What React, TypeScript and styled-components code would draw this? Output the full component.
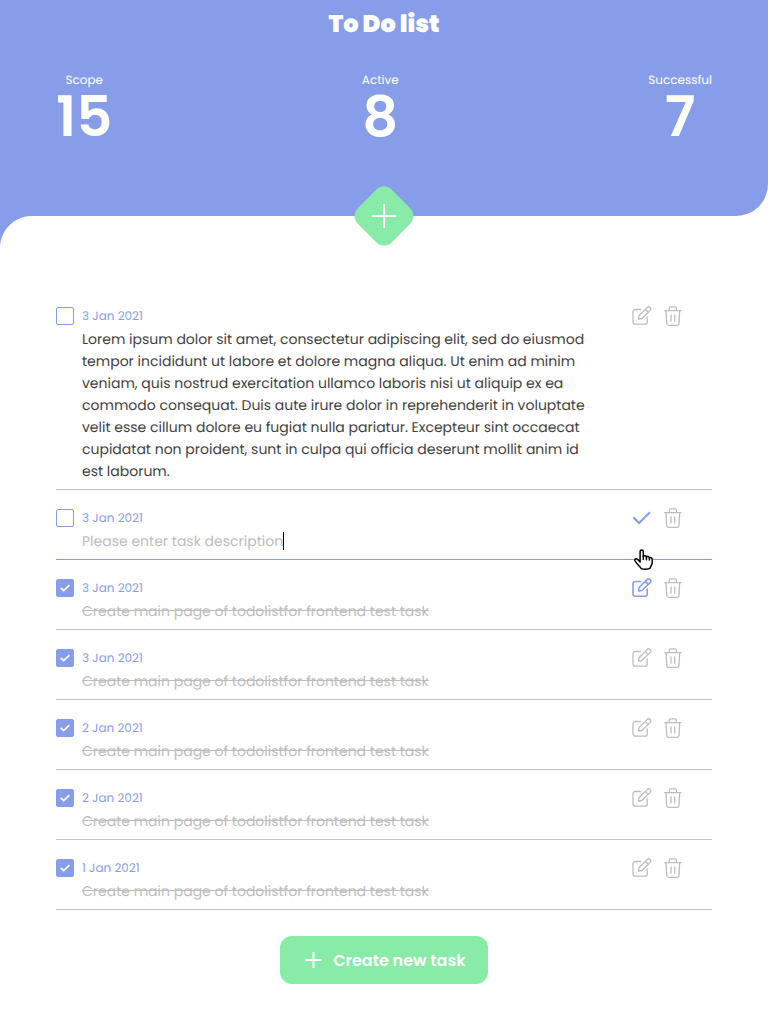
import React from 'react';
import styled, { createGlobalStyle } from 'styled-components';

const blue = '#879de9';
const green = '#88eba8';
const grey = '#c4c4c4';

const GlobalStyle = createGlobalStyle`
  * { box-sizing: border-box; }
  body {
    margin: 0;
    background: #fff;
    font-family: Poppins, Inter, 'Open Sans', sans-serif;
    text-rendering: geometricPrecision;
  }
  button { font: inherit; border: 0; padding: 0; background: none; cursor: pointer; }
`;

const Page = styled.div`
  width: 768px;
  height: 1024px;
  overflow: hidden;
`;

const Header = styled.header`
  position: relative;
  height: 216px;
  padding: 9px 56px 0;
  color: #fff;
  background: ${blue};
  border-bottom-right-radius: 32px;

  &::after {
    content: '';
    position: absolute;
    left: 0;
    top: 100%;
    width: 32px;
    height: 32px;
    background: radial-gradient(circle at 100% 100%, #fff 31.5px, ${blue} 32.5px);
  }
`;

const Title = styled.h1`
  margin: 0;
  font-size: 24px;
  line-height: 32px;
  font-weight: 900;
  text-align: center;
`;

const Stats = styled.div`
  display: flex;
  justify-content: space-between;
  margin-top: 31px;
`;

const Stat = styled.div`
  display: flex;
  flex-direction: column;
  align-items: center;
`;

const StatLabel = styled.span`
  font-size: 12px;
  line-height: 18px;
  font-weight: 400;
`;

const StatValue = styled.span`
  font-size: 56px;
  line-height: 54px;
  font-weight: 600;
`;

const Diamond = styled.button`
  position: absolute;
  z-index: 1;
  left: 50%;
  bottom: -24px;
  width: 48px;
  height: 48px;
  margin-left: -24px;
  display: grid;
  place-items: center;
  background: ${green};
  border-radius: 11px;
  transform: rotate(45deg);

  svg { transform: rotate(-45deg); }
`;

const List = styled.ul`
  list-style: none;
  margin: 72px 56px 0;
  padding: 0;
`;

const Row = styled.li<{ $focused?: boolean }>`
  position: relative;
  display: flex;
  justify-content: space-between;
  padding: 19px 29px 7px 0;
  border-bottom: 1px solid ${p => (p.$focused ? blue : grey)};
`;

const Checkbox = styled.span<{ $checked: boolean }>`
  flex: none;
  width: 18px;
  height: 18px;
  display: grid;
  place-items: center;
  border: 1px solid ${blue};
  border-radius: 2px;
  background: ${p => (p.$checked ? blue : '#fff')};
`;

const Body = styled.div`
  width: 510px;
  margin: 0 auto 0 8px;
`;

const DateText = styled.div`
  height: 21px;
  padding-top: 1px;
  font-size: 12px;
  line-height: 18px;
  color: ${blue};
`;

const Description = styled.div<{ $tone: Tone }>`
  font-size: 14px;
  line-height: 22px;
  color: ${p => (p.$tone === 'normal' ? '#3f3f3f' : '#bdbdbd')};
  text-decoration: ${p => (p.$tone === 'done' ? 'line-through' : 'none')};
`;

const Caret = styled.i`
  position: absolute;
  left: 227px;
  top: 42px;
  width: 1px;
  height: 18px;
  background: #000;
`;

const Actions = styled.div`
  display: flex;
  gap: 11px;
  height: 20px;
  margin-top: -1px;
`;

const IconButton = styled.button<{ $active?: boolean }>`
  width: 20px;
  height: 20px;
  color: ${p => (p.$active ? blue : '#bdbdbd')};

  svg { display: block; }
`;

const Pointer = styled.svg`
  position: absolute;
  z-index: 2;
  left: 577px;
  top: 58px;
`;

const CreateButton = styled.button`
  display: flex;
  align-items: center;
  width: 208px;
  height: 48px;
  margin: 26px auto 0;
  padding-left: 25px;
  gap: 11.25px;
  color: #fff;
  background: ${green};
  border-radius: 12px;
`;

const CreateLabel = styled.span`
  padding-top: 1px;
  font-size: 16px;
  line-height: 24px;
  font-weight: 600;
  white-space: nowrap;
`;

const Plus = ({ size }: { size: number }) => (
  <svg width={size} height={size} viewBox={`0 0 ${size} ${size}`} stroke="#fff" strokeWidth="2">
    <path d={`M${size / 2} 0V${size}M0 ${size / 2}H${size}`} />
  </svg>
);

const SmallPlus = () => (
  <svg width="17" height="16" viewBox="0 0 17 16" stroke="#fff" strokeWidth="2">
    <path d="M8.500 0V16M0.500 8H16.500" />
  </svg>
);

const EditIcon = ({ bold }: { bold?: boolean }) => (
  <svg width="20" height="20" viewBox="0 0.500 20 20" fill="none" stroke="currentColor" strokeWidth={bold ? 1.6 : 1.3} strokeLinecap="round" strokeLinejoin="round" overflow="visible">
    <path d="M8.500 4H3.200A2.200 2.200 0 0 0 1 6.200V16.500A2.200 2.200 0 0 0 3.200 18.700H13A2.200 2.200 0 0 0 15.200 16.500V11.500" />
    <path d="M6.500 13.500L7 10.200L15 2.100A2.050 2.050 0 0 1 18.100 5.100L9.800 13ZM13.200 3.900L16.200 6.900" />
  </svg>
);

const TrashIcon = () => (
  <svg width="20" height="20" viewBox="0 0 20 20" fill="none" stroke="currentColor" strokeWidth="1.300" strokeLinecap="round" strokeLinejoin="round">
    <path d="M1.700 4.600H18M6.300 4.500V2.300A1.500 1.500 0 0 1 7.800 0.800H11.900A1.500 1.500 0 0 1 13.400 2.300V4.500M3 4.800L3.700 17.500A2 2 0 0 0 5.700 19.300H14A2 2 0 0 0 16 17.500L16.700 4.800M8 9V15M11.700 9V15" />
  </svg>
);

const ConfirmIcon = () => (
  <svg width="20" height="20" viewBox="0 0 20 20" fill="none" stroke="currentColor" strokeWidth="2">
    <path d="M1.300 9.300L7 15L17.900 4.300" />
  </svg>
);

const Tick = () => (
  <svg width="10" height="8" viewBox="0 0 10 8" fill="none" stroke="#fff" strokeWidth="1.600">
    <path d="M0.700 3.800L3.700 6.700L9.400 1.200" />
  </svg>
);

const HandPointer = () => (
  <Pointer width="22" height="24" viewBox="0 0 22 24" fill="#fff" stroke="#000" strokeWidth="1.500" strokeLinejoin="round" strokeLinecap="round">
    <path d="M7.100 13V3.800C7.100 1.300 10.300 1.300 10.300 3.800V8.300C11.300 7.300 13.300 7.700 13.400 8.900C14.500 8 16.200 8.400 16.400 9.900C17.500 9.200 19.200 9.800 19.200 11.400V14.600C19.200 16.900 17.400 18.300 17.200 20C15.800 21.600 9.600 21.800 7.900 20.200C6.500 17.900 3.800 16.100 2.100 13C1 11 3.300 10.200 4.600 11.500L7.100 14Z" />
    <path d="M10.300 8.300V11.500M13.400 8.900V11.800M16.400 9.900V12" />
  </Pointer>
);

type Tone = 'normal' | 'input' | 'done';

interface Task {
  date: string;
  tone: Tone;
  text: string;
  editing?: boolean;
  highlighted?: boolean;
}

const doneText = 'Create main page of todolistfor frontend test task';

const tasks: Task[] = [
  {
    date: '3 Jan 2021',
    tone: 'normal',
    text:
      'Lorem ipsum dolor sit amet, consectetur adipiscing elit, sed do eiusmod tempor incididunt ut labore et dolore magna aliqua. Ut enim ad minim veniam, quis nostrud exercitation ullamco laboris nisi ut aliquip ex ea commodo consequat. Duis aute irure dolor in reprehenderit in voluptate velit esse cillum dolore eu fugiat nulla pariatur. Excepteur sint occaecat cupidatat non proident, sunt in culpa qui officia deserunt mollit anim id est laborum.',
  },
  { date: '3 Jan 2021', tone: 'input', text: 'Please enter task description', editing: true },
  { date: '3 Jan 2021', tone: 'done', text: doneText, highlighted: true },
  { date: '3 Jan 2021', tone: 'done', text: doneText },
  { date: '2 Jan 2021', tone: 'done', text: doneText },
  { date: '2 Jan 2021', tone: 'done', text: doneText },
  { date: '1 Jan 2021', tone: 'done', text: doneText },
];

const stats: [string, number][] = [['Scope', 15], ['Active', 8], ['Successful', 7]];

export default function App() {
  return (
    <Page>
      <GlobalStyle />
      <Header>
        <Title>To Do list</Title>
        <Stats>
          {stats.map(([label, value]) => (
            <Stat key={label}>
              <StatLabel>{label}</StatLabel>
              <StatValue>{value}</StatValue>
            </Stat>
          ))}
        </Stats>
        <Diamond aria-label="Add task"><Plus size={24} /></Diamond>
      </Header>
      <List>
        {tasks.map((task, i) => (
          <Row key={i} $focused={task.editing}>
            <Checkbox $checked={task.tone === 'done'}>{task.tone === 'done' && <Tick />}</Checkbox>
            <Body>
              <DateText>{task.date}</DateText>
              <Description $tone={task.tone}>{task.text}</Description>
            </Body>
            {task.editing && <Caret />}
            <Actions>
              <IconButton $active={task.editing || task.highlighted} aria-label={task.editing ? 'Save' : 'Edit'}>
                {task.editing ? <ConfirmIcon /> : <EditIcon bold={task.highlighted} />}
              </IconButton>
              <IconButton aria-label="Delete"><TrashIcon /></IconButton>
            </Actions>
            {task.editing && <HandPointer />}
          </Row>
        ))}
      </List>
      <CreateButton>
        <SmallPlus />
        <CreateLabel>Create new task</CreateLabel>
      </CreateButton>
    </Page>
  );
}
